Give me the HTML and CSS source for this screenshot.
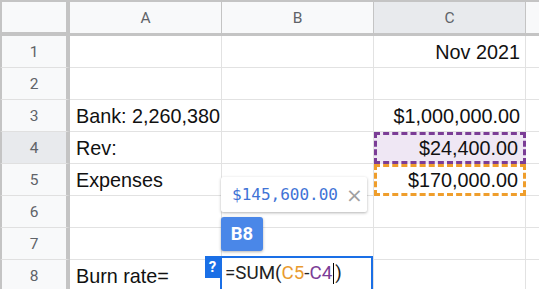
FILE: index.html
```html
<!DOCTYPE html>
<html lang="en">
<head>
    <meta charset="UTF-8">
    <meta name="viewport" content="width=device-width, initial-scale=1.0">
    <title>Burn rate</title>
    <link rel="stylesheet" href="styles.css">
</head>
<body>
    <div class="sheet">
        <div class="grid">
            <div class="corner"></div>
            <div class="col-head">A</div>
            <div class="col-head">B</div>
            <div class="col-head active">C</div>
            <div class="col-head edge"></div>

            <div class="row-head">1</div>
            <div class="cell"></div>
            <div class="cell"></div>
            <div class="cell num">Nov 2021</div>
            <div class="cell edge"></div>

            <div class="row-head">2</div>
            <div class="cell"></div>
            <div class="cell"></div>
            <div class="cell"></div>
            <div class="cell edge"></div>

            <div class="row-head">3</div>
            <div class="cell">Bank: 2,260,380</div>
            <div class="cell"></div>
            <div class="cell num">$1,000,000.00</div>
            <div class="cell edge"></div>

            <div class="row-head active">4</div>
            <div class="cell">Rev:</div>
            <div class="cell"></div>
            <div class="cell num ref-purple">$24,400.00</div>
            <div class="cell edge"></div>

            <div class="row-head">5</div>
            <div class="cell">Expenses</div>
            <div class="cell"></div>
            <div class="cell num ref-orange">$170,000.00</div>
            <div class="cell edge"></div>

            <div class="row-head">6</div>
            <div class="cell"></div>
            <div class="cell"></div>
            <div class="cell"></div>
            <div class="cell edge"></div>

            <div class="row-head">7</div>
            <div class="cell"></div>
            <div class="cell"></div>
            <div class="cell"></div>
            <div class="cell edge"></div>

            <div class="row-head">8</div>
            <div class="cell">Burn rate=</div>
            <div class="cell"></div>
            <div class="cell"></div>
            <div class="cell edge"></div>
        </div>

        <!-- overlays for the cell being edited -->
        <div class="preview">
            <span class="preview-value">$145,600.00</span>
            <span class="preview-close">&times;</span>
        </div>
        <div class="cell-tag">B8</div>
        <div class="help-tag">?</div>
        <div class="editor">=SUM(<span class="c5">C5</span>-<span class="c4">C4</span><span class="caret"></span>)</div>
    </div>
</body>
</html>
```

FILE: styles.css
```css
body {
    margin: 0;
    padding: 0;
    background: #fff;
    overflow: hidden;
    font-family: Arial, "Liberation Sans", sans-serif;
}

.sheet {
    position: relative;
    width: 539px;
    height: 289px;
    overflow: hidden;
}

.grid {
    display: grid;
    grid-template-columns: 70px 152px 152px 152px 20px;
    grid-template-rows: 36px repeat(8, 32px);
}

.corner {
    background-color: #f8f9fa;
    border-top: 2px solid #c4c4c4;
    border-left: 2px solid #c4c4c4;
    border-right: 4px solid #c4c4c4;
    border-bottom: 4px solid #c4c4c4;
}

.col-head {
    display: flex;
    align-items: center;
    justify-content: center;
    background-color: #f8f9fa;
    border-top: 2px solid #c4c4c4;
    border-right: 1px solid #c4c4c4;
    border-bottom: 3px solid #c4c4c4;
    font-family: Roboto, Arial, sans-serif;
    font-size: 15.5px;
    color: #5f6368;
    padding-top: 1px;
}

.col-head.active,
.row-head.active {
    background-color: #e8eaed;
}

.row-head {
    display: flex;
    align-items: center;
    justify-content: center;
    background-color: #f8f9fa;
    border-left: 2px solid #c4c4c4;
    border-right: 4px solid #c4c4c4;
    border-bottom: 1px solid #e0e0e0;
    font-family: Roboto, Arial, sans-serif;
    font-size: 15.5px;
    color: #5f6368;
}

.cell {
    display: flex;
    align-items: flex-end;
    padding: 0 6px 3px;
    border-right: 1px solid #e2e2e2;
    border-bottom: 1px solid #e2e2e2;
    font-size: 19.8px;
    color: #111;
    white-space: nowrap;
    overflow: visible;
}

.cell.num {
    justify-content: flex-end;
    padding-right: 5px;
}

.cell.edge {
    padding: 0;
}

.col-head.edge {
    border-right: none;
}

.ref-purple {
    background-color: #efe7f4;
    border: 3px dashed #7b3d96;
    padding-bottom: 1px;
    padding-right: 3px;
}

.ref-orange {
    border: 3px dashed #ef9e2c;
    padding-bottom: 1px;
    padding-right: 3px;
}

.preview {
    position: absolute;
    left: 221px;
    top: 177px;
    width: 146px;
    height: 35px;
    box-sizing: border-box;
    display: flex;
    align-items: center;
    padding: 0 0 0 11px;
    gap: 8px;
    background: #fff;
    border-radius: 2px;
    box-shadow: 0 1px 3px rgba(0, 0, 0, 0.3);
}

.preview-value {
    font-family: "DejaVu Sans Mono", "Liberation Mono", monospace;
    font-size: 16px;
    color: #3f73d6;
}

.preview-close {
    font-family: "DejaVu Sans", sans-serif;
    font-size: 20px;
    color: #a0a0a0;
    line-height: 1;
}

.cell-tag {
    position: absolute;
    left: 221px;
    top: 217px;
    width: 42px;
    height: 34px;
    display: flex;
    align-items: center;
    justify-content: center;
    background-color: #4a87e8;
    border-radius: 3px;
    box-shadow: 0 1px 3px rgba(0, 0, 0, 0.3);
    color: #fff;
    font-family: Roboto, Arial, sans-serif;
    font-weight: bold;
    font-size: 18.5px;
}

.help-tag {
    position: absolute;
    left: 205px;
    top: 256px;
    width: 15px;
    height: 22px;
    display: flex;
    align-items: center;
    justify-content: center;
    background-color: #1a6fe6;
    color: #fff;
    font-family: Roboto, Arial, sans-serif;
    font-weight: bold;
    font-size: 15px;
}

.editor {
    position: absolute;
    left: 220px;
    top: 256px;
    width: 153px;
    height: 36px;
    box-sizing: border-box;
    display: flex;
    align-items: center;
    padding: 0 3px 2px;
    background: #fff;
    border: 2px solid #1a6fe6;
    font-family: Roboto, Arial, sans-serif;
    font-size: 18.8px;
    color: #222;
}

.c5 {
    color: #e99a2f;
}

.c4 {
    color: #7b3d96;
}

.caret {
    display: inline-block;
    width: 1px;
    height: 21px;
    background: #000;
    margin: 0 1px;
}
```
